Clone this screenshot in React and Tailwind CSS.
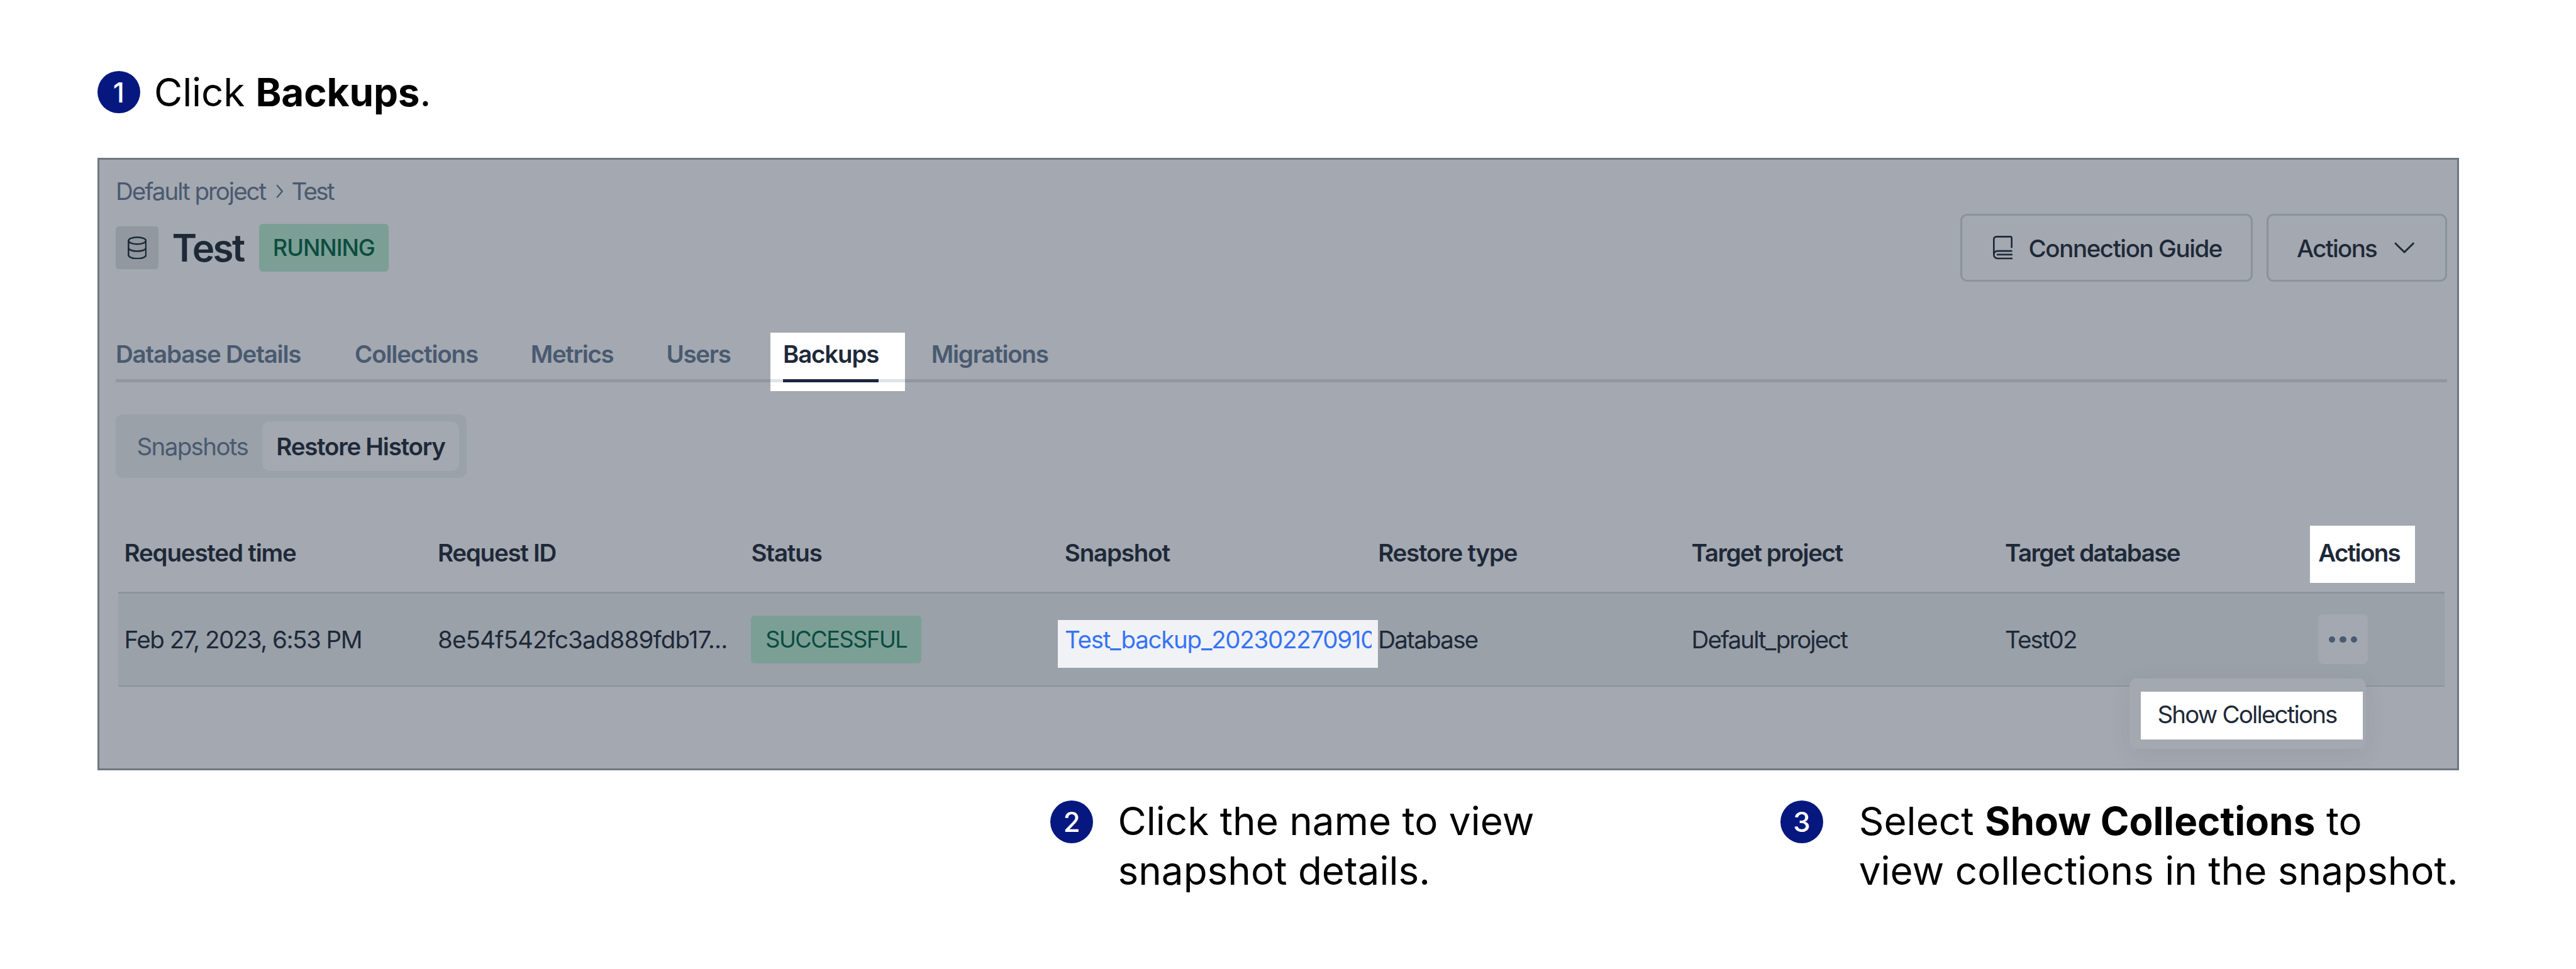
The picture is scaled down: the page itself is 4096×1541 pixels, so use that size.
import React from "react";

const TABS = [
  { label: "Database Details", cls: "w-[380px] tracking-[-0.0315em]" },
  { label: "Collections", cls: "w-[279.8px] tracking-[-0.031em]" },
  { label: "Metrics", cls: "w-[215.7px] tracking-[-0.036em]" },
  { label: "Users", cls: "w-[185.5px] tracking-[-0.034em]" },
  { label: "Backups", cls: "w-[235.8px] tracking-[-0.031em]", active: true },
  { label: "Migrations", cls: "tracking-[-0.033em]" },
];

const HEADERS = [
  { label: "Requested time", cls: "tracking-[-0.031em]" },
  { label: "Request ID", cls: "tracking-[-0.033em]" },
  { label: "Status", cls: "tracking-[-0.03em]" },
  { label: "Snapshot", cls: "tracking-[-0.03em]" },
  { label: "Restore type", cls: "tracking-[-0.032em]" },
  { label: "Target project", cls: "tracking-[-0.037em]" },
  { label: "Target database", cls: "tracking-[-0.041em]" },
];

function DatabaseIcon() {
  return (
    <svg viewBox="0 0 32.4 39" className="h-[36.6px] w-[30.4px]" fill="none" stroke="#1e2938" strokeWidth="2.7">
      <ellipse cx="16.2" cy="7.2" rx="14.8" ry="5.8" />
      <path d="M1.4 7.2v24.4c0 3.2 6.6 6 14.8 6s14.8-2.8 14.8-6V7.2" />
      <path d="M1.4 19.4c0 3.2 6.6 5.6 14.8 5.6s14.8-2.4 14.8-5.6" />
    </svg>
  );
}

function BookIcon() {
  return (
    <svg viewBox="0 0 33 39.7" className="h-[37.3px] w-[31px]" fill="none" stroke="#1e2938" strokeWidth="2.8">
      <path d="M31.6 20.5V3.4a2 2 0 0 0-2-2H5.9a4.5 4.5 0 0 0-4.5 4.5v26.2a6.2 6.2 0 0 0 6.2 6.2H33" />
      <path d="M1.4 31.8a6.2 6.2 0 0 1 6.2-6.1H32.4" />
      <path d="M6.4 31.8H33" />
    </svg>
  );
}

function Step({ n }) {
  return (
    <div className="flex h-[67.6px] w-[67.6px] shrink-0 items-center justify-center rounded-full bg-[#06187f] text-[43.5px] font-medium leading-none text-white">
      <span className="translate-y-[1px]">{n}</span>
    </div>
  );
}

export default function App() {
  return (
    <div className="h-[1541px] w-[4096px] overflow-hidden bg-white pl-[155px] pt-[112.6px] font-['Inter',sans-serif] text-[38.5px] leading-[50px] text-[#1e2938]">
      <div className="flex h-[67.6px] items-center text-[62px] leading-[78.9px] text-black">
        <Step n="1" />
        <p className="translate-y-[1px] pl-[22.4px] tracking-[-0.002em]">
          Click <b className="font-bold">Backups</b>.
        </p>
      </div>

      <section className="mt-[70.5px] h-[974.7px] w-[3755px] border-[3px] border-[#6f7681] bg-[#a4a8b0] pl-[26px] pt-[30.7px]">
        <nav className="flex h-[40px] items-center text-[#495a70]">
          <span className="tracking-[-0.0525em]">Default project</span>
          <svg viewBox="0 0 12 24" className="ml-[16.5px] mr-[13.5px] h-[22.5px] w-[11.3px]" fill="none" stroke="#495a70" strokeWidth="2.6">
            <path d="M1.2 1.4L10.4 12 1.2 22.6" />
          </svg>
          <span className="tracking-[-0.07em]">Test</span>
        </nav>

        <header className="mt-[16px] flex h-[107.4px] w-[3706.6px] items-center">
          <div className="flex h-[67.6px] w-[68px] items-center justify-center rounded-[5px] bg-[#91989f]">
            <DatabaseIcon />
          </div>
          <h1 className="ml-[21.5px] w-[138px] text-[60.1px] font-semibold tracking-[-0.045em]">Test</h1>
          <span className="flex h-[76px] w-[206.7px] items-center rounded-[6px] bg-[#7c9f95] pl-[22.3px] text-[36.2px] font-medium tracking-[-0.0283em] text-[#0b4c40]">
            RUNNING
          </span>
          <div className="ml-auto flex gap-[22.6px]">
            <button className="flex h-[107.4px] w-[464.6px] items-center rounded-[11px] border-[3px] border-[#8a939d] pl-[49px] font-medium tracking-[-0.0368em]">
              <BookIcon />
              <span className="ml-[25.3px] translate-y-[1px]">Connection Guide</span>
            </button>
            <button className="flex h-[107.4px] w-[286.2px] items-center rounded-[11px] border-[3px] border-[#8a939d] pl-[44.5px] font-medium">
              <span className="w-[155px] translate-y-[1px] text-left tracking-[-0.0443em]">Actions</span>
              <svg viewBox="0 0 34 19" className="h-[18px] w-[32.2px]" fill="none" stroke="#1e2938" strokeWidth="3">
                <path d="M1.2 1.4L17 16.8 32.8 1.4" />
              </svg>
            </button>
          </div>
        </header>

        <div className="mt-[75.5px] flex h-[85.1px] w-[3706.6px] flex-col">
          <div className="flex h-[79.4px] items-center font-semibold text-[#495a70]">
            {TABS.map((t) =>
              t.active ? (
                <div key={t.label} className={"relative h-[79.4px] text-[#1e2938] " + t.cls}>
                  <div className="absolute -left-[19.5px] top-[6.2px] h-[93px] w-[213.8px] bg-white pt-[73.2px]">
                    <div className="h-[5.7px] bg-[#dfe3ea] pl-[19.5px]">
                      <div className="h-[5.7px] w-[152px] bg-[#1b2740]" />
                    </div>
                  </div>
                  <span className="relative leading-[80px]">{t.label}</span>
                </div>
              ) : (
                <span key={t.label} className={"whitespace-nowrap " + t.cls}>{t.label}</span>
              )
            )}
          </div>
          <div className="h-[5.7px] bg-[#92969f]" />
        </div>

        <div className="mt-[50.7px] flex h-[101.4px] w-[558.2px] items-center rounded-[12px] bg-[#9aa1a9]">
          <span className="w-[232.9px] pl-[33.5px] tracking-[-0.0426em] text-[#495a70]">Snapshots</span>
          <span className="flex h-[79px] w-[313.6px] items-center rounded-[12px] bg-[#a4a8b0] pl-[22.4px] font-semibold tracking-[-0.0325em]">
            Restore History
          </span>
        </div>

        <div className="ml-[3.5px] mt-[56.3px] w-[3699.9px]">
          <div className="grid h-[124px] grid-cols-[repeat(7,498.4px)_1fr] items-center pl-[10.1px] font-semibold">
            {HEADERS.map((h) => (
              <span key={h.label} className={h.cls}>{h.label}</span>
            ))}
            <span className="-ml-[13px] mt-[5.6px] flex h-[90.2px] w-[166.6px] items-center bg-white pl-[13px] tracking-[-0.045em]">
              <span className="-translate-y-[2.8px]">Actions</span>
            </span>
          </div>
          <div className="h-[2.8px] bg-[#8a939d]" />
          <div className="grid h-[146.5px] grid-cols-[repeat(7,498.4px)_1fr] items-center bg-[#9aa1a9] pl-[10.1px]">
            <span className="tracking-[-0.039em]">Feb 27, 2023, 6:53 PM</span>
            <span className="tracking-[-0.0222em]">8e54f542fc3ad889fdb17...</span>
            <span className="flex h-[76px] w-[270.2px] items-center rounded-[6px] bg-[#7c9f95] pl-[22.8px] text-[36.2px] tracking-[-0.0408em] text-[#0b4c40]">
              SUCCESSFUL
            </span>
            <div className="-ml-[10.8px] mt-[14px] flex h-[75.8px] w-[509px] items-center bg-[#f0f2f5] pl-[11px]">
              <span className="w-[487.6px] -translate-y-[7px] overflow-hidden whitespace-nowrap tracking-[-0.0335em] text-[#3773f5]">
                Test_backup_202302270910
              </span>
            </div>
            <span className="tracking-[-0.045em]">Database</span>
            <span className="tracking-[-0.0503em]">Default_project</span>
            <span className="tracking-[-0.049em]">Test02</span>
            <div className="relative">
              <button className="flex h-[79px] w-[78.3px] items-center justify-center gap-[7.7px] rounded-[8px] bg-[#a4a8b0]">
                <i className="h-[10.1px] w-[10.1px] rounded-full bg-[#495a70]" />
                <i className="h-[10.1px] w-[10.1px] rounded-full bg-[#495a70]" />
                <i className="h-[10.1px] w-[10.1px] rounded-full bg-[#495a70]" />
              </button>
              <div className="absolute -left-[300.3px] top-[101.5px] z-10 h-[112.7px] w-[376.3px] rounded-[11px] bg-[#a4a8b0] pl-[18px] pt-[21.5px] shadow-[0_8px_36px_rgba(40,50,65,0.08)]">
                <div className="h-[76px] w-[352.5px] bg-white pl-[26.4px] leading-[72px] tracking-[-0.0478em]">Show Collections</div>
              </div>
            </div>
          </div>
          <div className="h-[2px] bg-[#8b929b]" />
        </div>
      </section>

      <footer className="flex pt-[39px] text-[62px] leading-[79px] text-black">
        <div className="ml-[1515.3px] flex w-[1160.8px]">
          <div className="mt-[8.6px]">
            <Step n="2" />
          </div>
          <p className="ml-[39.6px] translate-y-[2px]">
            Click the name to view
            <br />
            snapshot details.
          </p>
        </div>
        <div className="flex">
          <div className="mt-[8.6px]">
            <Step n="3" />
          </div>
          <p className="ml-[57px] translate-y-[2px] whitespace-nowrap">
            Select <b className="font-bold">Show Collections</b> to
            <br />
            view collections in the snapshot.
          </p>
        </div>
      </footer>
    </div>
  );
}
